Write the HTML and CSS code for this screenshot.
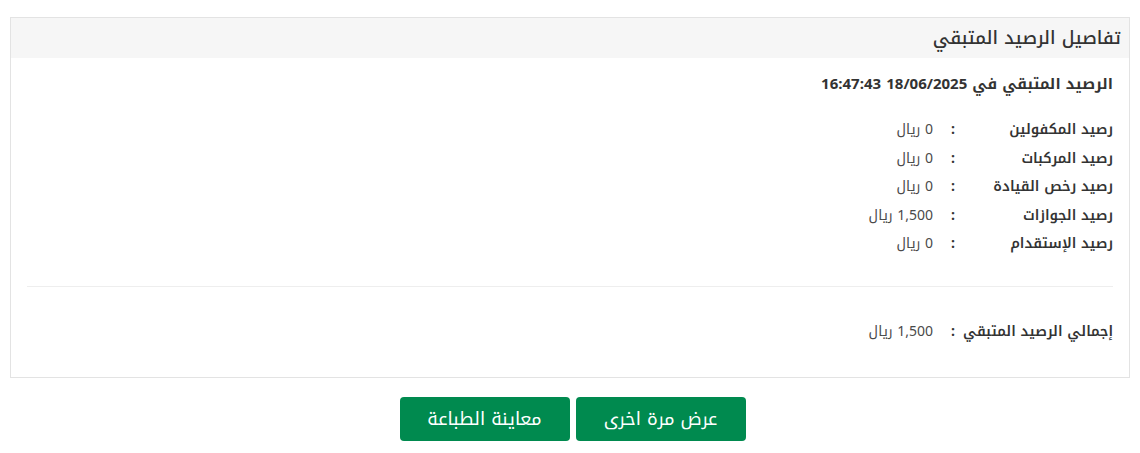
FILE: index.html
```html
<!DOCTYPE html>
<html lang="ar" dir="rtl">
<head>
<meta charset="utf-8">
<title>تفاصيل الرصيد المتبقي</title>
<link rel="stylesheet" href="styles.css">
</head>
<body>
<div class="panel">
  <div class="panel-head">تفاصيل الرصيد المتبقي</div>
  <div class="panel-body">
    <div class="stamp">الرصيد المتبقي في <span dir="ltr">16:47:43 18/06/2025</span></div>
    <div class="rows">
      <div class="row"><span class="lbl">رصيد المكفولين</span><span class="col">:</span><span class="val">0 ريال</span></div>
      <div class="row"><span class="lbl">رصيد المركبات</span><span class="col">:</span><span class="val">0 ريال</span></div>
      <div class="row"><span class="lbl">رصيد رخص القيادة</span><span class="col">:</span><span class="val">0 ريال</span></div>
      <div class="row"><span class="lbl">رصيد الجوازات</span><span class="col">:</span><span class="val">1,500 ريال</span></div>
      <div class="row"><span class="lbl">رصيد الإستقدام</span><span class="col">:</span><span class="val">0 ريال</span></div>
    </div>
    <hr class="sep">
    <div class="rows total">
      <div class="row"><span class="lbl">إجمالي الرصيد المتبقي</span><span class="col">:</span><span class="val">1,500 ريال</span></div>
    </div>
  </div>
</div>
<div class="actions">
  <button class="btn">عرض مرة اخرى</button>
  <button class="btn">معاينة الطباعة</button>
</div>
</body>
</html>
```
FILE: styles.css
```css
html, body {
  margin: 0;
  padding: 0;
  background: #fff;
}
body {
  font-family: "Noto Kufi Arabic", "DejaVu Sans", sans-serif;
  color: #333;
  padding: 17px 10px 0;
}
.panel {
  border: 1px solid #e3e3e3;
  background: #fff;
}
.panel-head {
  background: #f6f6f6;
  height: 40px;
  line-height: 40px;
  padding: 0 8px;
  font-size: 18px;
  font-weight: 500;
  color: #333;
}
.panel-body {
  padding: 16px 16px 0;
}
.stamp {
  font-weight: bold;
  font-size: 15px;
  line-height: 20px;
}
.rows {
  margin-top: 22px;
}
.row {
  display: grid;
  grid-template-columns: 150px 20px auto;
  height: 28.5px;
  align-items: center;
  font-size: 14px;
  line-height: 20px;
}
.lbl {
  font-weight: 600;
}
.col {
  font-weight: bold;
  text-align: center;
}
.val {
  font-size: 14px;
  color: #4a4a4a;
  padding-right: 10px;
}
.sep {
  border: 0;
  border-top: 1px solid #eeeeee;
  margin: 27px 0 0;
}
.total {
  margin-top: 31px;
  padding-bottom: 31px;
}
.actions {
  display: flex;
  justify-content: center;
  gap: 6px;
  margin-top: 19px;
  padding-left: 5px;
}
.btn {
  background: #008a4f;
  color: #fff;
  border: 0;
  border-radius: 4px;
  height: 44px;
  width: 170px;
  font-family: "Noto Kufi Arabic", "DejaVu Sans", sans-serif;
  font-size: 18px;
  padding: 0;
}
```
